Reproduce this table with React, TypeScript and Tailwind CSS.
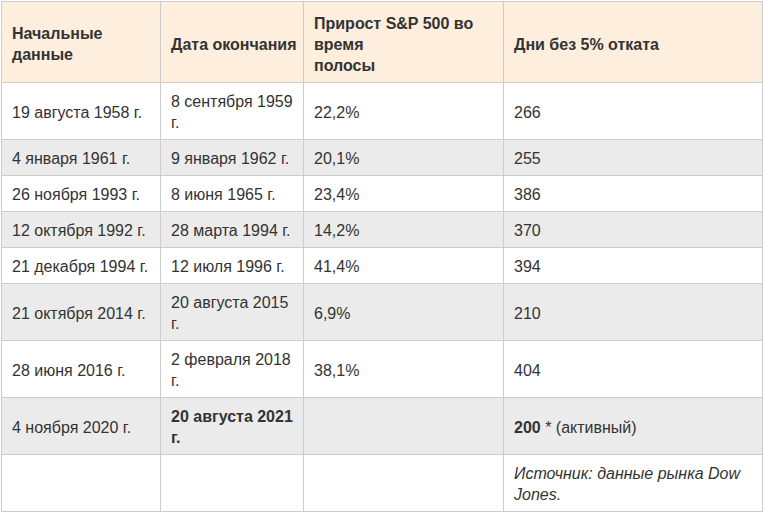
const rows = [
  { start: "19 августа 1958 г.", end: "8 сентября 1959 г.", gain: "22,2%", days: "266" },
  { start: "4 января 1961 г.", end: "9 января 1962 г.", gain: "20,1%", days: "255" },
  { start: "26 ноября 1993 г.", end: "8 июня 1965 г.", gain: "23,4%", days: "386" },
  { start: "12 октября 1992 г.", end: "28 марта 1994 г.", gain: "14,2%", days: "370" },
  { start: "21 декабря 1994 г.", end: "12 июля 1996 г.", gain: "41,4%", days: "394" },
  { start: "21 октября 2014 г.", end: "20 августа 2015 г.", gain: "6,9%", days: "210" },
  { start: "28 июня 2016 г.", end: "2 февраля 2018 г.", gain: "38,1%", days: "404" },
];

const cell = "border border-[#cccccc] px-[10px] pt-[8px] pb-[6px] align-middle";
const head = "border border-[#cccccc] px-[10px] pt-[10px] pb-[6px] align-middle";

export default function App() {
  return (
    <div className="min-h-screen bg-white pt-px pl-px font-['Liberation_Sans',Arial,sans-serif] text-[16px] leading-[21px] text-[#333333]">
      <table className="w-[761px] table-fixed border-collapse">
        <colgroup>
          <col className="w-[159px]" />
          <col className="w-[143px]" />
          <col className="w-[200px]" />
          <col className="w-[259px]" />
        </colgroup>
        <thead>
          <tr className="h-[81px] bg-[#fdeedd] text-left font-bold">
            <th className={head}>Начальные данные</th>
            <th className={head + " whitespace-nowrap"}>Дата окончания</th>
            <th className={head}>
              Прирост S&amp;P 500 во время
              <br />
              полосы
            </th>
            <th className={head}>Дни без 5% отката</th>
          </tr>
        </thead>
        <tbody>
          {rows.map((r, i) => (
            <tr key={r.start} className={i % 2 === 1 ? "bg-[#ebebeb]" : "bg-white"}>
              <td className={cell}>{r.start}</td>
              <td className={cell}>{r.end}</td>
              <td className={cell}>{r.gain}</td>
              <td className={cell}>{r.days}</td>
            </tr>
          ))}
          <tr className="bg-[#ebebeb]">
            <td className={cell}>4 ноября 2020 г.</td>
            <td className={cell + " font-bold"}>20 августа 2021 г.</td>
            <td className={cell}></td>
            <td className={cell}>
              <b>200</b> * (активный)
            </td>
          </tr>
          <tr className="bg-white">
            <td className={cell}></td>
            <td className={cell}></td>
            <td className={cell}></td>
            <td className={cell + " italic"}>Источник: данные рынка Dow Jones.</td>
          </tr>
        </tbody>
      </table>
    </div>
  );
}
